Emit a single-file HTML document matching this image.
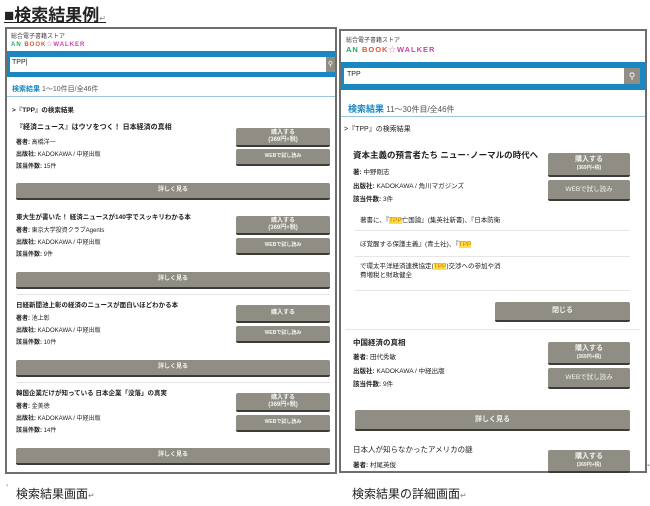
<!DOCTYPE html>
<html><head><meta charset="utf-8">
<style>
*{margin:0;padding:0;box-sizing:border-box}
body{width:650px;height:506px;background:#fff;position:relative;overflow:hidden;font-family:"Liberation Sans","Noto Sans CJK JP",sans-serif;color:#222}
.a{position:absolute;white-space:nowrap}
.panel{position:absolute;border:2px solid #6e6e6e;background:#fff;overflow:hidden}
.btn{position:absolute;background:#8f8d84;border-bottom:2px solid #3d3c38;color:#f4f4f0;text-align:center;font-weight:bold;border-radius:2px;line-height:1.1}
.band{position:absolute;background:#1a87c1}
.inp{position:absolute;background:#fff}
.sb{position:absolute;background:#8f8d84;color:#fff;text-align:center}
.hl{background:#ffe040;color:#d07a00}
.ln{position:absolute;height:1px;background:#e6e6e6}
</style></head><body>
<div class="a" style="left:4px;top:1px;font-size:17px;font-weight:bold;text-decoration:underline;letter-spacing:0px">■検索結果例<span style="font-size:8px;font-weight:normal;color:#888;text-decoration:none">↵</span></div>

<!-- LEFT PANEL -->
<div class="panel" style="left:5px;top:27px;width:332px;height:447px"></div>
<div class="a" style="left:11px;top:31px;font-size:6px;color:#444">総合電子書籍ストア</div>
<div class="a" style="left:11px;top:39px;font-size:6px;font-weight:bold;letter-spacing:1px"><span style="color:#2a6">AN</span> <span style="color:#d53">BOOK</span><span style="color:#d9a">☆</span><span style="color:#c4a">WALKER</span></div>
<div class="band" style="left:7px;top:51px;width:328px;height:26px"></div>
<div class="inp" style="left:10px;top:57px;width:316px;height:15px"></div>
<div class="a" style="left:12px;top:59px;font-size:7px">TPP|</div>
<div class="sb" style="left:326px;top:57px;width:9px;height:15px;font-size:7px;line-height:15px">⚲</div>
<div class="a" style="left:12px;top:84px;font-size:7px;color:#555"><span style="color:#1a87c1;font-weight:bold">検索結果</span> 1～10件目/全46件</div>
<div class="ln" style="left:7px;top:96px;width:328px;background:#9cc6dc"></div>
<div class="a" style="left:12px;top:104px;font-size:6.5px;font-weight:bold">>『TPP』の検索結果</div>

<div class="a" style="left:16px;top:122px;font-size:7px;font-weight:bold">『経済ニュース』はウソをつく！ 日本経済の真相</div>
<div class="a" style="left:16px;top:137px;font-size:6px;line-height:12px"><b>著者:</b> 高橋洋一<br><b>出版社:</b> KADOKAWA / 中経出版<br><b>該当件数:</b> 15件</div>
<div class="btn" style="left:236px;top:128px;width:94px;height:19px;font-size:6px;padding-top:2px">購入する<br>(369円+税)</div>
<div class="btn" style="left:236px;top:149px;width:94px;height:17px;font-size:5px;line-height:15px">WEBで試し読み</div>
<div class="btn" style="left:16px;top:183px;width:314px;height:17px;font-size:6px;line-height:15px">詳しく見る</div>

<div class="a" style="left:16px;top:211px;font-size:6.5px;font-weight:bold">東大生が書いた！ 経済ニュースが140字でスッキリわかる本</div>
<div class="a" style="left:16px;top:225px;font-size:6px;line-height:12px"><b>著者:</b> 東京大学投資クラブAgents<br><b>出版社:</b> KADOKAWA / 中経出版<br><b>該当件数:</b> 9件</div>
<div class="btn" style="left:236px;top:216px;width:94px;height:19px;font-size:6px;padding-top:2px">購入する<br>(369円+税)</div>
<div class="btn" style="left:236px;top:238px;width:94px;height:17px;font-size:5px;line-height:15px">WEBで試し読み</div>
<div class="btn" style="left:16px;top:272px;width:314px;height:17px;font-size:6px;line-height:15px">詳しく見る</div>
<div class="ln" style="left:16px;top:294px;width:314px"></div>

<div class="a" style="left:16px;top:299px;font-size:6.5px;font-weight:bold">日経新聞池上彰の経済のニュースが面白いほどわかる本</div>
<div class="a" style="left:16px;top:313px;font-size:6px;line-height:12px"><b>著者:</b> 池上彰<br><b>出版社:</b> KADOKAWA / 中経出版<br><b>該当件数:</b> 10件</div>
<div class="btn" style="left:236px;top:305px;width:94px;height:18px;font-size:6px;line-height:16px">購入する</div>
<div class="btn" style="left:236px;top:326px;width:94px;height:17px;font-size:5px;line-height:15px">WEBで試し読み</div>
<div class="btn" style="left:16px;top:360px;width:314px;height:17px;font-size:6px;line-height:15px">詳しく見る</div>
<div class="ln" style="left:16px;top:382px;width:314px"></div>

<div class="a" style="left:16px;top:387px;font-size:6.5px;font-weight:bold">韓国企業だけが知っている 日本企業「没落」の真実</div>
<div class="a" style="left:16px;top:401px;font-size:6px;line-height:12px"><b>著者:</b> 金美徳<br><b>出版社:</b> KADOKAWA / 中経出版<br><b>該当件数:</b> 14件</div>
<div class="btn" style="left:236px;top:393px;width:94px;height:19px;font-size:6px;padding-top:2px">購入する<br>(369円+税)</div>
<div class="btn" style="left:236px;top:415px;width:94px;height:17px;font-size:5px;line-height:15px">WEBで試し読み</div>
<div class="btn" style="left:16px;top:448px;width:314px;height:17px;font-size:6px;line-height:15px">詳しく見る</div>

<!-- RIGHT PANEL -->
<div class="panel" style="left:339px;top:29px;width:308px;height:444px"></div>
<div class="a" style="left:346px;top:35px;font-size:6px;color:#444">総合電子書籍ストア</div>
<div class="a" style="left:346px;top:44px;font-size:7.5px;font-weight:bold;letter-spacing:1px"><span style="color:#2a6">AN</span> <span style="color:#d53">BOOK</span><span style="color:#d9a">☆</span><span style="color:#c4a">WALKER</span></div>
<div class="band" style="left:341px;top:62px;width:304px;height:28px"></div>
<div class="inp" style="left:344px;top:68px;width:280px;height:16px"></div>
<div class="a" style="left:347px;top:71px;font-size:7px">TPP</div>
<div class="sb" style="left:624px;top:68px;width:16px;height:16px;font-size:9px;line-height:16px">⚲</div>
<div class="a" style="left:348px;top:102px;font-size:8px;color:#555"><span style="color:#1a87c1;font-weight:bold;font-size:9px">検索結果</span> 11～30件目/全46件</div>
<div class="ln" style="left:341px;top:116px;width:304px;background:#9cc6dc"></div>
<div class="a" style="left:344px;top:124px;font-size:7px">>『TPP』の検索結果</div>

<div class="a" style="left:353px;top:149px;font-size:8.5px;font-weight:bold">資本主義の預言者たち ニュー･ノーマルの時代へ</div>
<div class="a" style="left:353px;top:166px;font-size:6.5px;line-height:13.5px"><b>著:</b> 中野剛志<br><b>出版社:</b> KADOKAWA / 角川マガジンズ<br><b>該当件数:</b> 3件</div>
<div class="btn" style="left:548px;top:153px;width:82px;height:24px;font-size:7px;padding-top:3px">購入する<br><span style="font-size:5px">(369円+税)</span></div>
<div class="btn" style="left:548px;top:180px;width:82px;height:21px;font-size:6.5px;line-height:19px;font-weight:normal">WEBで試し読み</div>
<div class="a" style="left:360px;top:214px;font-size:6.5px">著書に、『<span class="hl">TPP</span>亡国論』(集英社新書)、『日本防衛</div>
<div class="ln" style="left:355px;top:230px;width:275px"></div>
<div class="a" style="left:360px;top:238px;font-size:6.5px">ぼ覚醒する保護主義』(青土社)、『<span class="hl">TPP</span></div>
<div class="ln" style="left:355px;top:256px;width:275px"></div>
<div class="a" style="left:360px;top:262px;font-size:6.5px;line-height:9px">で環太平洋経済連携協定(<span class="hl">TPP</span>)交渉への参加や消<br>費増税と財政健全</div>
<div class="ln" style="left:355px;top:290px;width:275px"></div>
<div class="btn" style="left:495px;top:302px;width:135px;height:20px;font-size:7px;line-height:18px">閉じる</div>
<div class="ln" style="left:345px;top:329px;width:295px"></div>

<div class="a" style="left:353px;top:337px;font-size:7.5px;font-weight:bold">中国経済の真相</div>
<div class="a" style="left:353px;top:351px;font-size:6.5px;line-height:13.5px"><b>著者:</b> 田代秀敏<br><b>出版社:</b> KADOKAWA / 中経出版<br><b>該当件数:</b> 9件</div>
<div class="btn" style="left:548px;top:342px;width:82px;height:23px;font-size:7px;padding-top:3px">購入する<br><span style="font-size:5px">(369円+税)</span></div>
<div class="btn" style="left:548px;top:368px;width:82px;height:21px;font-size:6.5px;line-height:19px;font-weight:normal">WEBで試し読み</div>
<div class="btn" style="left:355px;top:410px;width:275px;height:21px;font-size:7px;line-height:19px">詳しく見る</div>

<div class="a" style="left:353px;top:444px;font-size:7.5px">日本人が知らなかったアメリカの謎</div>
<div class="a" style="left:353px;top:459px;font-size:6.5px"><b>著者:</b> 村尾英俊</div>
<div class="btn" style="left:548px;top:450px;width:82px;height:23px;font-size:7px;padding-top:3px">購入する<br><span style="font-size:5px">(369円+税)</span></div>
<div class="a" style="left:647px;top:462px;font-size:6px;color:#888">↵</div>

<div class="a" style="left:6px;top:484px;font-size:6px;color:#888">⁴</div>
<div class="a" style="left:16px;top:485px;font-size:12px">検索結果画面<span style="font-size:8px;color:#888">↵</span></div>
<div class="a" style="left:352px;top:485px;font-size:12px">検索結果の詳細画面<span style="font-size:8px;color:#888">↵</span></div>
</body></html>
